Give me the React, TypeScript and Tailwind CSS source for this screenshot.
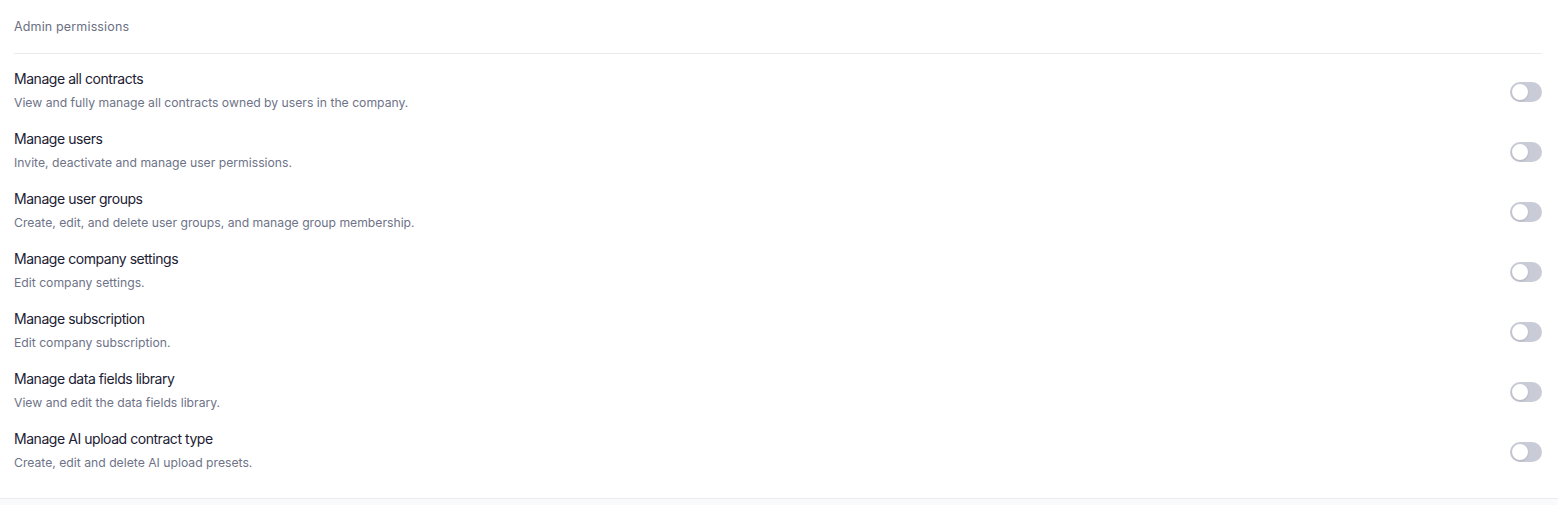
const permissions = [
  {
    title: "Manage all contracts",
    description: "View and fully manage all contracts owned by users in the company.",
  },
  {
    title: "Manage users",
    description: "Invite, deactivate and manage user permissions.",
  },
  {
    title: "Manage user groups",
    description: "Create, edit, and delete user groups, and manage group membership.",
  },
  {
    title: "Manage company settings",
    description: "Edit company settings.",
  },
  {
    title: "Manage subscription",
    description: "Edit company subscription.",
  },
  {
    title: "Manage data fields library",
    description: "View and edit the data fields library.",
  },
  {
    title: "Manage AI upload contract type",
    description: "Create, edit and delete AI upload presets.",
  },
];

const Toggle = () => (
  <div className="mt-1 w-[32px] h-[20px] rounded-full bg-[#c9cbd7] p-[2px] flex items-center cursor-pointer">
    <div className="w-[16px] h-[16px] rounded-full bg-white shadow-sm"></div>
  </div>
);

export default function App() {
  return (
    <div className="min-h-[505px] bg-[#f9fafb] font-['Inter',sans-serif]">
      <div className="bg-white border-b border-[#ececf0] px-[14px] pr-[16px] pb-[18px]">
        {/* Header */}
        <div className="pt-[18px] pb-[18px] border-b border-[#ececf0]">
          <p className="text-[12.5px] leading-[17px] tracking-[0.15px] text-[#6b7083]">
            Admin permissions
          </p>
        </div>

        {/* Rows */}
        <div className="pt-[6px]">
          {permissions.map((item, index) => (
            <div key={index} className="flex items-center justify-between py-[9px]">
              <div>
                <p className="text-[14px] leading-[20px] tracking-[-0.45px] text-[#1b2033]">
                  {item.title}
                </p>
                <p className="mt-[6px] text-[12.2px] leading-[16px] text-[#6e7387]">
                  {item.description}
                </p>
              </div>
              <Toggle />
            </div>
          ))}
        </div>
      </div>
    </div>
  );
}
